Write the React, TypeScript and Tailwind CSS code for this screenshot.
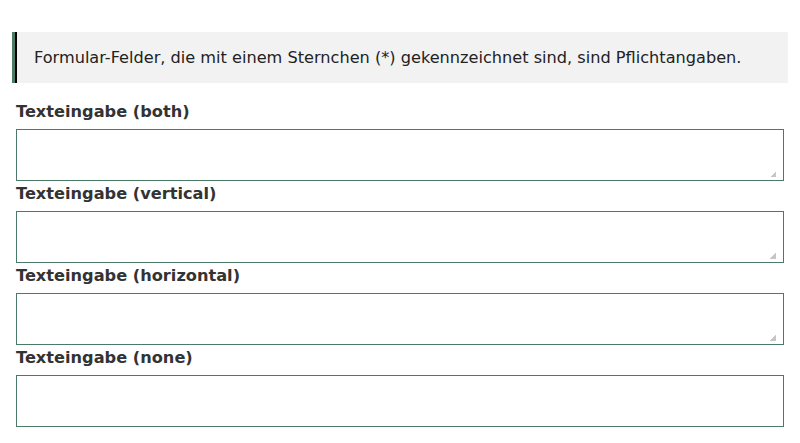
const fields = [
  { label: 'Texteingabe (both)', cls: 'resize' },
  { label: 'Texteingabe (vertical)', cls: 'resize-y' },
  { label: 'Texteingabe (horizontal)', cls: 'resize-x' },
  { label: 'Texteingabe (none)', cls: 'resize-none' },
];

export default function App() {
  return (
    <div className="min-h-[443px] bg-white px-4 pt-8 text-[#333] [font-family:'DejaVu_Sans',Verdana,sans-serif]">
      <div className="-mx-1 border-l-[3px] border-[#4b7a67] bg-[#f2f2f2]">
        <div className="border-l-2 border-black py-[15px] pl-[17px] text-[16.15px] leading-[21px] text-[#222]">
          Formular-Felder, die mit einem Sternchen (*) gekennzeichnet sind, sind Pflichtangaben.
        </div>
      </div>
      <form className="mt-[20px] flex flex-col">
        {fields.map((f, i) => (
          <div key={f.label} className="flex flex-col">
            <label
              htmlFor={`f${i}`}
              className={`${i === 0 ? 'pb-[9px]' : 'pt-[4px] pb-[9px]'} text-[16.2px] font-bold leading-[17px] text-[#333]`}
            >
              {f.label}
            </label>
            <textarea
              id={`f${i}`}
              className={`${f.cls} block h-[52px] w-full border border-[#4b7a67] bg-white outline-none [&::-webkit-resizer]:[background:linear-gradient(135deg,transparent_50%,#c6c6c6_50%)_right_7px_bottom_3px/6px_6px_no-repeat]`}
            />
          </div>
        ))}
      </form>
    </div>
  );
}
